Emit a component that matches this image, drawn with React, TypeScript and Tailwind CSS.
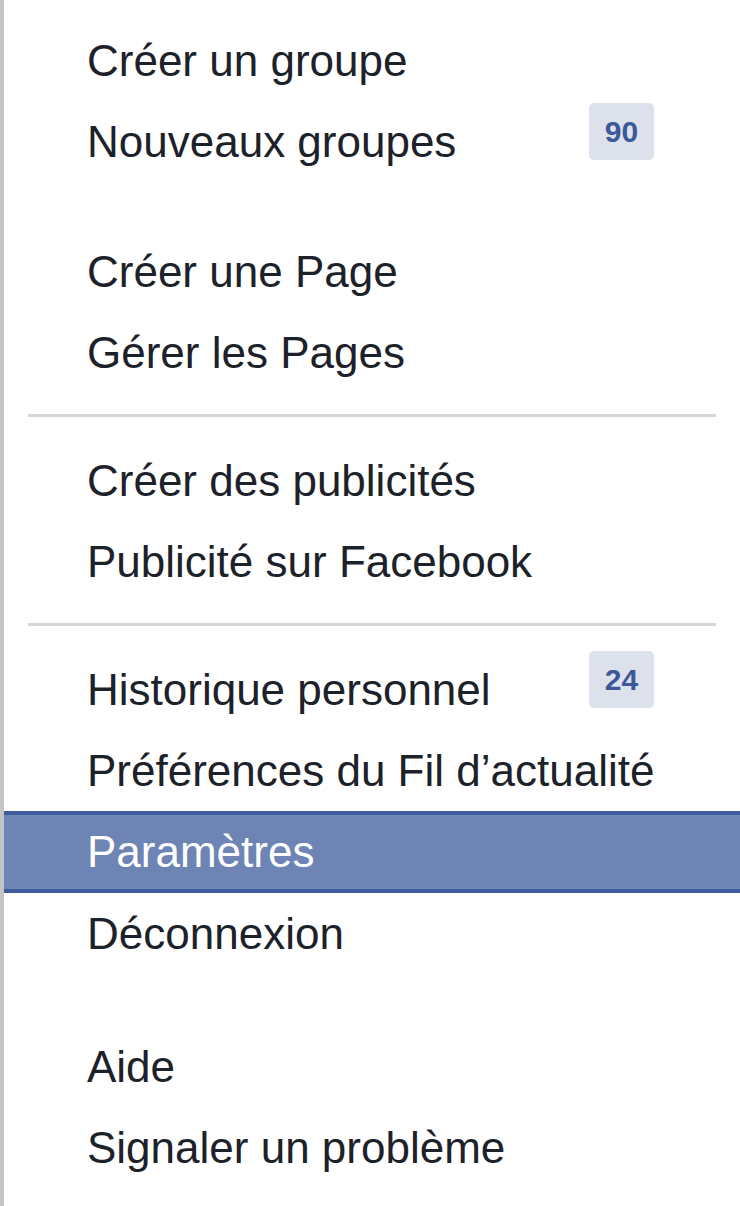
import React from 'react';

type Item = { label: string; badge?: string; active?: boolean };

const groups: { items: Item[]; separator?: boolean }[] = [
  { items: [{ label: 'Créer un groupe' }, { label: 'Nouveaux groupes', badge: '90' }] },
  { items: [{ label: 'Créer une Page' }, { label: 'Gérer les Pages' }] },
  { items: [{ label: 'Créer des publicités' }, { label: 'Publicité sur Facebook' }], separator: true },
  {
    items: [
      { label: 'Historique personnel', badge: '24' },
      { label: 'Préférences du Fil d’actualité' },
      { label: 'Paramètres', active: true },
      { label: 'Déconnexion' },
    ],
    separator: true,
  },
  { items: [{ label: 'Aide' }, { label: 'Signaler un problème' }] },
];

function Row({ item }: { item: Item }) {
  if (item.active) {
    return (
      <div className="h-[82px] flex items-center pl-[83px] bg-[#6d84b4] border-y-4 border-[#3f5d9c] text-white whitespace-nowrap">
        {item.label}
      </div>
    );
  }
  return (
    <div className="h-[81px] flex items-center justify-between pl-[83px] pr-[86px] text-[#1d2129] whitespace-nowrap">
      <span>{item.label}</span>
      {item.badge && (
        <span className="w-[65px] h-[57px] -mt-[20px] rounded-[5px] bg-[#dce1ec] text-[#3b5998] text-[30px] font-bold flex items-center justify-center">
          {item.badge}
        </span>
      )}
    </div>
  );
}

export default function App() {
  return (
    <div
      className="min-h-[1206px] w-[740px] bg-white border-l-4 border-[#c4c4c4] pt-[20px] text-[44px] leading-none"
      style={{ fontFamily: '"Liberation Sans", Arial, sans-serif' }}
    >
      {groups.map((g, i) => (
        <div key={i}>
          {i > 0 &&
            (g.separator ? (
              <div className="pt-[21px] pb-[23px] px-[24px]">
                <div className="h-[3px] bg-[#d3d6db]" />
              </div>
            ) : (
              <div className={i === 4 ? 'h-[52px]' : 'h-[49px]'} />
            ))}
          {g.items.map((it) => (
            <Row key={it.label} item={it} />
          ))}
        </div>
      ))}
    </div>
  );
}
